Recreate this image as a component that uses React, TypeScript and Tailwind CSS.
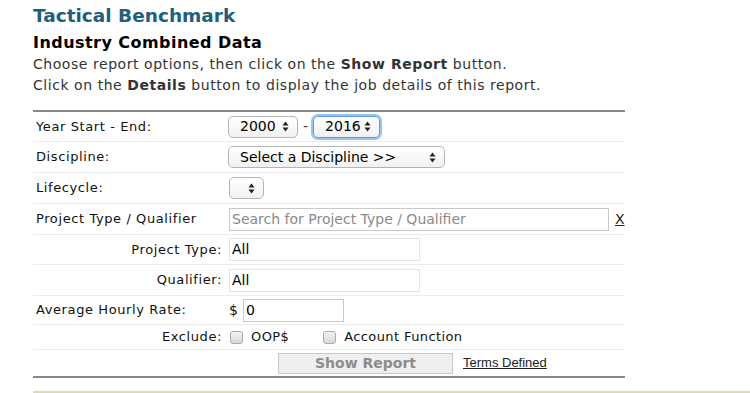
import React from 'react'

const font = { fontFamily: '"DejaVu Sans", Verdana, sans-serif' }

function Arrows() {
  return (
    <svg width="7" height="11" viewBox="0 0 7 11" className="shrink-0">
      <path d="M3.5 0.5 L6.5 4.5 L0.5 4.5 Z" fill="#222" />
      <path d="M3.5 10.5 L6.5 6.5 L0.5 6.5 Z" fill="#222" />
    </svg>
  )
}

function FakeSelect({
  text,
  width,
  focused,
}: {
  text?: string
  width: string
  focused?: boolean
}) {
  return (
    <div
      className={`flex h-[22px] items-center justify-between rounded-[5px] border bg-gradient-to-b from-white to-[#f1f1f1] pl-[11px] pr-[8px] text-[14px] text-black ${width} ${
        focused
          ? 'border-[#5b9be0] shadow-[0_0_0_2px_#9cc3ef]'
          : 'border-[#b4b4b4]'
      }`}
    >
      <span>{text}</span>
      <Arrows />
    </div>
  )
}

function Row({
  label,
  right,
  h,
  children,
}: {
  label: string
  right?: boolean
  h: string
  children: React.ReactNode
}) {
  return (
    <div className={`flex items-center border-b border-[#ececec] ${h}`}>
      <div
        className={`w-[195px] shrink-0 pl-[3px] pr-[6px] text-[13px] tracking-[0.6px] text-[#111] ${
          right ? 'text-right' : ''
        }`}
      >
        {label}
      </div>
      <div className="flex flex-1 items-center">{children}</div>
    </div>
  )
}

function Checkbox() {
  return (
    <span className="inline-block h-[13px] w-[13px] rounded-[3px] border border-[#aaa] bg-gradient-to-b from-[#f3f3f3] to-[#d9d9d9]" />
  )
}

export default function App() {
  return (
    <div className="h-[393px] w-[750px] overflow-hidden bg-white" style={font}>
      <div className="pl-[33px] pt-[4px]">
        <h1 className="text-[18.5px] font-bold leading-[24px] text-[#1f5f7e]">Tactical Benchmark</h1>
        <h2 className="mt-[5px] text-[16px] font-bold leading-[20px] tracking-[0.45px] text-black">
          Industry Combined Data
        </h2>
        <p className="mt-[1px] text-[14px] leading-[21px] tracking-[0.55px] text-[#333]">
          Choose report options, then click on the <b>Show Report</b> button.
        </p>
        <p className="text-[14px] leading-[21px] tracking-[0.55px] text-[#333]">
          Click on the <b>Details</b> button to display the job details of this report.
        </p>
      </div>

      <div className="ml-[33px] mt-[14px] w-[592px] border-y-[2px] border-[#888]">
        <Row label="Year Start - End:" h="h-[30px]">
          <FakeSelect text="2000" width="w-[70px]" />
          <span className="mx-[5px] text-[14px] text-[#333]">-</span>
          <FakeSelect text="2016" width="w-[67px]" focused />
        </Row>
        <Row label="Discipline:" h="h-[31px]">
          <FakeSelect text="Select a Discipline >>" width="w-[217px]" />
        </Row>
        <Row label="Lifecycle:" h="h-[31px]">
          <div className="ml-[1px]">
            <FakeSelect width="w-[35px]" />
          </div>
        </Row>
        <Row label="Project Type / Qualifier" h="h-[31px]">
          <div className="ml-[1px] flex h-[23px] w-[380px] items-center border border-[#c8c8c8] pl-[2px] text-[14px] text-[#8a8a8a]">
            Search for Project Type / Qualifier
          </div>
          <a className="ml-[6px] text-[14px] text-[#222] underline">X</a>
        </Row>
        <Row label="Project Type:" right h="h-[30px]">
          <div className="ml-[1px] flex h-[23px] w-[191px] items-center border border-[#e4e4e4] pl-[2px] text-[14px] text-black">
            All
          </div>
        </Row>
        <Row label="Qualifier:" right h="h-[31px]">
          <div className="ml-[1px] flex h-[23px] w-[191px] items-center border border-[#e4e4e4] pl-[2px] text-[14px] text-black">
            All
          </div>
        </Row>
        <Row label="Average Hourly Rate:" h="h-[29px]">
          <span className="ml-[1px] text-[14px] text-[#111]">$</span>
          <div className="ml-[5px] flex h-[23px] w-[101px] items-center border border-[#c8c8c8] pl-[2px] text-[14px] text-black">
            0
          </div>
        </Row>
        <Row label="Exclude:" right h="h-[25px]">
          <span className="ml-[2px] flex items-center">
            <Checkbox />
          </span>
          <span className="ml-[8px] text-[13px] tracking-[0.4px] text-[#111]">OOP$</span>
          <span className="ml-[34px] flex items-center">
            <Checkbox />
          </span>
          <span className="ml-[8px] text-[13px] tracking-[0.4px] text-[#111]">Account Function</span>
        </Row>
        <div className="flex h-[26px] items-center">
          <div className="ml-[245px] flex h-[21px] w-[175px] items-center justify-center border border-[#c8c8c8] bg-[#efefef] text-[14px] font-bold text-[#8c8c8c]">
            Show Report
          </div>
          <a
            className="ml-[10px] text-[13px] text-[#222] underline"
            style={{ fontFamily: '"Liberation Sans", Arial, sans-serif' }}
          >
            Terms Defined
          </a>
        </div>
      </div>

      <div className="ml-[33px] mt-[13px] h-[2px] bg-[#dcdcae]" />
    </div>
  )
}
